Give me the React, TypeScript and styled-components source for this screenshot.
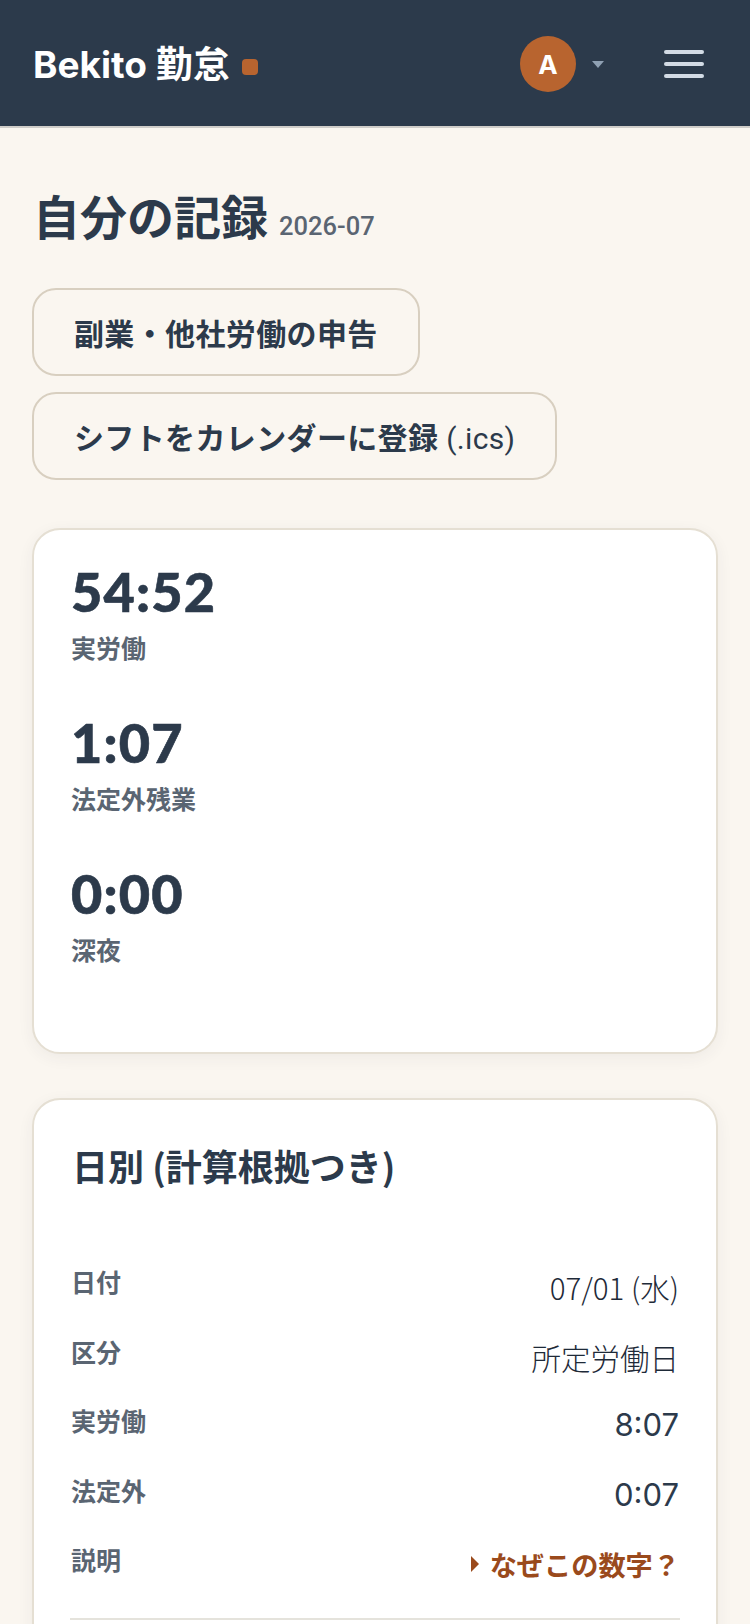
import styled, { createGlobalStyle } from 'styled-components';

const GlobalStyle = createGlobalStyle`
  html, body {
    margin: 0;
    height: 1624px;
    overflow: hidden;
    background: #faf6f0;
    font-family: 'Noto Sans CJK JP', sans-serif;
    color: #2c3a4b;
  }
  * { box-sizing: border-box; }
`;

const rows = [
  { label: '日付', value: '07/01 (水)' },
  { label: '区分', value: '所定労働日' },
  { label: '実労働', value: '8:07', strong: true },
  { label: '法定外', value: '0:07', strong: true },
];

const stats = [
  { value: '54:52', label: '実労働' },
  { value: '1:07', label: '法定外残業' },
  { value: '0:00', label: '深夜' },
];

const App = () => (
  <>
    <GlobalStyle />
    <Header>
      <Brand>
        Bekito 勤怠
        <BrandDot />
      </Brand>
      <HeaderRight>
        <UserButton>
          <Avatar>A</Avatar>
          <Caret />
        </UserButton>
        <MenuButton aria-label='menu'>
          <MenuBar />
          <MenuBar />
          <MenuBar />
        </MenuButton>
      </HeaderRight>
    </Header>
    <Main>
      <Title>
        自分の記録<TitleMonth>2026-07</TitleMonth>
      </Title>
      <Actions>
        <ActionButton>副業・他社労働の申告</ActionButton>
        <ActionButton>
          シフトをカレンダーに登録<FileSuffix> (.ics)</FileSuffix>
        </ActionButton>
      </Actions>
      <SummaryCard>
        {stats.map((stat) => (
          <Stat key={stat.label}>
            <StatValue>{stat.value}</StatValue>
            <StatLabel>{stat.label}</StatLabel>
          </Stat>
        ))}
      </SummaryCard>
      <DailyCard>
        <CardTitle>日別 (計算根拠つき)</CardTitle>
        <DayList>
          {rows.map((row) => (
            <DayRow key={row.label}>
              <DayLabel $strong={row.strong}>{row.label}</DayLabel>
              <DayValue $strong={row.strong}>{row.value}</DayValue>
            </DayRow>
          ))}
          <DayRow>
            <DayLabel>説明</DayLabel>
            <WhyLink>
              <WhyMarker />
              なぜこの数字？
            </WhyLink>
          </DayRow>
        </DayList>
        <Divider />
      </DailyCard>
    </Main>
  </>
);

export default App;

const Header = styled.header`
  height: 128px;
  background: #2c3a4b;
  border-bottom: 2px solid #cfcdc9;
  display: flex;
  align-items: center;
  justify-content: space-between;
  padding: 0 46px 2px 33px;
`;

const Brand = styled.div`
  display: flex;
  align-items: center;
  color: #fff;
  font-family: Inter, 'Noto Sans CJK JP', sans-serif;
  font-size: 37px;
  font-weight: 700;
`;

const BrandDot = styled.span`
  width: 16px;
  height: 16px;
  margin: 10px 0 0 12px;
  border-radius: 4px;
  background: #b8642f;
`;

const HeaderRight = styled.div`
  display: flex;
  align-items: center;
  gap: 60px;
  padding-top: 4px;
`;

const UserButton = styled.div`
  display: flex;
  align-items: center;
  gap: 16px;
`;

const Avatar = styled.div`
  width: 56px;
  height: 56px;
  border-radius: 50%;
  background: #b8642f;
  color: #fff;
  display: flex;
  align-items: center;
  justify-content: center;
  font-family: Inter, sans-serif;
  font-size: 26px;
  font-weight: 700;
`;

const Caret = styled.span`
  width: 0;
  height: 0;
  border-left: 6px solid transparent;
  border-right: 6px solid transparent;
  border-top: 7px solid #8fa0b3;
`;

const MenuButton = styled.div`
  width: 40px;
  display: flex;
  flex-direction: column;
  gap: 8px;
`;

const MenuBar = styled.span`
  height: 4px;
  border-radius: 2px;
  background: #d3dbe5;
`;

const Main = styled.main`
  padding: 56px 32px 0;
`;

const Title = styled.h1`
  margin: 0 0 0 1px;
  display: flex;
  align-items: baseline;
  font-size: 47px;
  line-height: 62px;
  font-weight: 700;
`;

const TitleMonth = styled.span`
  margin-left: 11px;
  font-family: Roboto, sans-serif;
  font-size: 25.5px;
  font-weight: 500;
  color: #5a6572;
`;

const Actions = styled.div`
  margin-top: 31px;
  display: flex;
  flex-direction: column;
  align-items: flex-start;
  gap: 16px;
`;

const ActionButton = styled.button`
  height: 88px;
  padding: 0 40px;
  background: transparent;
  border: 2px solid #d8cfc0;
  border-radius: 24px;
  font-family: inherit;
  font-size: 30px;
  font-weight: 600;
  letter-spacing: 0.012em;
  color: #2c3a4b;
`;

const FileSuffix = styled.span`
  font-family: Roboto, sans-serif;
  font-weight: 400;
`;

const Card = styled.section`
  background: #fff;
  border: 2px solid #e5dfd3;
  border-radius: 28px;
  box-shadow: 0 4px 16px rgba(44, 58, 75, 0.06);
  padding: 0 37px;
`;

const SummaryCard = styled(Card)`
  margin-top: 48px;
  height: 526px;
  padding-top: 27px;
  display: flex;
  flex-direction: column;
  gap: 39px;
`;

const Stat = styled.div`
  display: flex;
  flex-direction: column;
`;

const StatValue = styled.div`
  font-family: Lato, sans-serif;
  font-size: 54px;
  line-height: 70px;
  font-weight: 900;
  letter-spacing: 1.2px;
  font-kerning: none;
  -webkit-text-stroke: 0.6px #2c3a4b;
`;

const StatLabel = styled.div`
  margin-top: -2px;
  font-size: 25px;
  line-height: 44px;
  font-weight: 600;
  color: #5a6572;
`;

const DailyCard = styled(Card)`
  margin-top: 44px;
  height: 700px;
  padding-top: 41px;
`;

const CardTitle = styled.h2`
  margin: 0 0 0 1px;
  font-size: 36px;
  line-height: 48px;
  font-weight: 700;
`;

const DayList = styled.div`
  margin-top: 72px;
  display: flex;
  flex-direction: column;
  gap: 23.6px;
`;

const DayRow = styled.div`
  display: flex;
  justify-content: space-between;
  align-items: flex-start;
  height: 46px;
`;

const DayLabel = styled.span<{ $strong?: boolean }>`
  font-size: 25px;
  line-height: 40px;
  font-weight: ${(p) => (p.$strong ? 700 : 600)};
  color: #5a6572;
`;

const DayValue = styled.span<{ $strong?: boolean }>`
  font-family: ${(p) => (p.$strong ? 'Inter, sans-serif' : 'inherit')};
  font-size: ${(p) => (p.$strong ? 31 : 29.5)}px;
  line-height: ${(p) => (p.$strong ? 49 : 52)}px;
  font-weight: ${(p) => (p.$strong ? 400 : 300)};
  color: ${(p) => (p.$strong ? '#2c3a4b' : '#1e2a38')};
`;

const WhyLink = styled.span`
  display: flex;
  align-items: center;
  margin-right: -1px;
  font-size: 27.2px;
  line-height: 50px;
  font-weight: 700;
  color: #9a4a1c;
`;

const WhyMarker = styled.span`
  width: 0;
  height: 0;
  margin-right: 11px;
  border-top: 8px solid transparent;
  border-bottom: 8px solid transparent;
  border-left: 8px solid #9a4a1c;
`;

const Divider = styled.hr`
  margin: 33px -1px 0;
  border: 0;
  border-top: 2px solid #e5e3dc;
`;
